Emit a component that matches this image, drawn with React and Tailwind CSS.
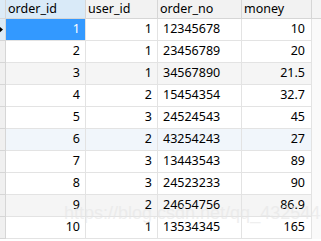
const rows = [
  { id: 1, user: 1, no: '12345678', money: '10' },
  { id: 2, user: 1, no: '23456789', money: '20' },
  { id: 3, user: 1, no: '34567890', money: '21.5', shade: 'bg-[#f5f5f5]' },
  { id: 4, user: 2, no: '15454354', money: '32.7' },
  { id: 5, user: 3, no: '24524543', money: '45' },
  { id: 6, user: 2, no: '43254243', money: '27', shade: 'bg-[#f1f6fb]' },
  { id: 7, user: 3, no: '13443543', money: '89' },
  { id: 8, user: 3, no: '24523233', money: '90' },
  { id: 9, user: 2, no: '24654756', money: '86.9', shade: 'bg-[#f5f5f5]' },
  { id: 10, user: 1, no: '13534345', money: '165' },
];

const cell = 'h-[22px] flex items-center border-r border-b border-[#e3e3e3] px-[5px]';

export default function App() {
  return (
    <div className="relative w-[321px] h-[241px] overflow-hidden bg-white text-[12.5px] text-black" style={{ fontFamily: '"Noto Sans", "Noto Sans CJK SC", sans-serif' }}>
      <div className="grid grid-cols-[6px_80px_72px_84px_70px_1fr]">
        {/* header */}
        <div className="h-[19px] bg-[#dcebf7] border-r border-b border-[#d6d6d6]" />
        <div className="h-[19px] flex items-center px-[2px] bg-[#d9eaf8] border-r border-b border-[#d6d6d6]">order_id</div>
        <div className="h-[19px] flex items-center px-[2px] bg-[#f2f2f2] border-r border-b border-[#d6d6d6]">user_id</div>
        <div className="h-[19px] flex items-center px-[2px] bg-[#f2f2f2] border-r border-b border-[#d6d6d6]">order_no</div>
        <div className="h-[19px] flex items-center px-[2px] bg-[#f2f2f2] border-r border-b border-[#d6d6d6]">money</div>
        <div className="h-[19px] bg-[#f4f4f4] border-b border-[#d6d6d6]" />

        {rows.map((r, i) => (
          <div key={r.id} className="contents">
            <div className={`h-[22px] flex items-center border-r border-b border-[#d6d6d6] ${i === 0 ? 'bg-[#dcebf7]' : 'bg-[#f0f0f0]'}`}>
              {i === 0 && (
                <svg width="5" height="7" viewBox="0 0 5 7" className="-ml-[1px]">
                  <path d="M0 0 L4 3.5 L0 7 Z" fill="#000" />
                </svg>
              )}
            </div>
            <div className={`${cell} justify-end ${i === 0 ? 'bg-[#3399ff] text-white' : r.shade || 'bg-white'}`}>{r.id}</div>
            <div className={`${cell} justify-end ${r.shade || 'bg-white'}`}>{r.user}</div>
            <div className={`${cell} justify-start px-[3px] ${r.shade || 'bg-white'}`}>{r.no}</div>
            <div className={`${cell} justify-end px-[6px] ${r.shade || 'bg-white'}`}>{r.money}</div>
            <div className="h-[22px] bg-[#fafafa]" />
          </div>
        ))}
      </div>

      {/* watermark overlay */}
      <div
        className="absolute left-[64px] top-[200px] text-[18px] text-[#e6e6e6] whitespace-nowrap pointer-events-none"
        style={{ fontFamily: '"Liberation Sans", sans-serif', opacity: 0.6 }}
      >
        https://blog.csdn.net/qq_43254480
      </div>
    </div>
  );
}
